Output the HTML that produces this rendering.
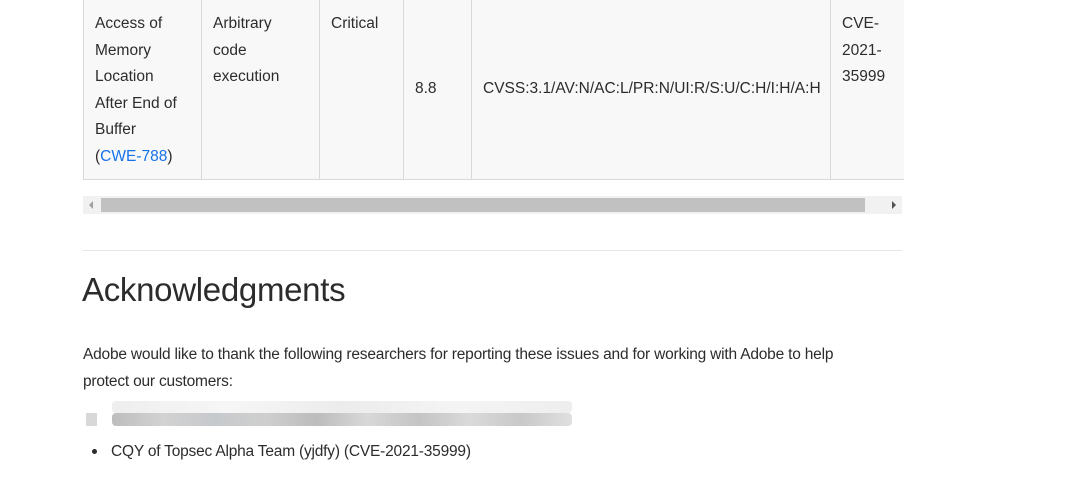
<!DOCTYPE html>
<html><head><meta charset="utf-8"><style>
body{margin:0;width:1080px;height:482px;background:#fff;font-family:"Liberation Sans",sans-serif;color:#2c2c2c;overflow:hidden;position:relative}
.t{position:absolute;left:83px;top:-1px;border-collapse:collapse;background:#f8f8f8;font-size:15.5px;line-height:26.5px;table-layout:fixed;width:820px}
.t td{border:1px solid #d9d9d9;vertical-align:top;padding:11px 11px 0 11px;height:180px;box-sizing:border-box}
a{color:#1473e6;text-decoration:none}
.sb{position:absolute;left:83px;top:196px;width:819px;height:18px;background:#f1f1f1}
.th{position:absolute;left:101px;top:198px;width:764px;height:14px;background:#c1c1c1}
.hr{position:absolute;left:83px;top:250px;width:819px;height:1px;background:#e6e6e6}
h2{position:absolute;left:82px;top:271px;margin:0;font-weight:400;font-size:33px;color:#2c2c2c;letter-spacing:-0.3px}
p{position:absolute;left:83px;top:341px;margin:0;font-size:15.5px;line-height:27px;width:900px;letter-spacing:-0.2px}
</style></head><body>
<table class="t"><colgroup><col style="width:118px"><col style="width:118px"><col style="width:84px"><col style="width:68px"><col style="width:359px"><col style="width:73px"></colgroup><tr>
<td>Access of<br>Memory<br>Location<br>After End of<br>Buffer<br>(<a>CWE-788</a>)</td>
<td>Arbitrary<br>code<br>execution</td>
<td>Critical</td>
<td style="vertical-align:middle;padding-top:0">8.8</td>
<td style="vertical-align:middle;padding-top:0;padding-right:0;white-space:nowrap">CVSS:3.1/AV:N/AC:L/PR:N/UI:R/S:U/C:H/I:H/A:H</td>
<td style="border-right:none">CVE-<br>2021-<br>35999</td>
</tr></table>
<div class="sb"></div><div class="th"></div>
<div style="position:absolute;left:89px;top:201px;width:0;height:0;border-top:4px solid transparent;border-bottom:4px solid transparent;border-right:4px solid #a0a0a0"></div>
<div style="position:absolute;left:892px;top:201px;width:0;height:0;border-top:4px solid transparent;border-bottom:4px solid transparent;border-left:4px solid #505050"></div>
<div class="hr"></div>
<h2>Acknowledgments</h2>
<p>Adobe would like to thank the following researchers for reporting these issues and for working with Adobe to help<br>protect our customers:</p>
<div style="position:absolute;left:112px;top:401px;width:460px;height:12px;background:linear-gradient(90deg,#eee,#f6f6f6,#ececec,#f4f4f4,#eee);border-radius:4px"></div>
<div style="position:absolute;left:86px;top:413px;width:11px;height:13px;background:#d8d8d8"></div>
<div style="position:absolute;left:112px;top:413px;width:460px;height:13px;background:linear-gradient(90deg,#bdbdbd,#d2d2d2,#c6c9cc,#cfcfcf,#bcbcbc,#d8d8d8,#c4c4c4,#dadada,#c8c8c8,#e0e0e0);border-radius:4px"></div>
<div style="position:absolute;left:92px;top:449px;width:5px;height:5px;border-radius:50%;background:#2c2c2c"></div>
<div style="position:absolute;left:111px;top:442px;font-size:15.5px;line-height:20px;letter-spacing:-0.2px">CQY of Topsec Alpha Team (yjdfy) (CVE-2021-35999)</div>
</body></html>
